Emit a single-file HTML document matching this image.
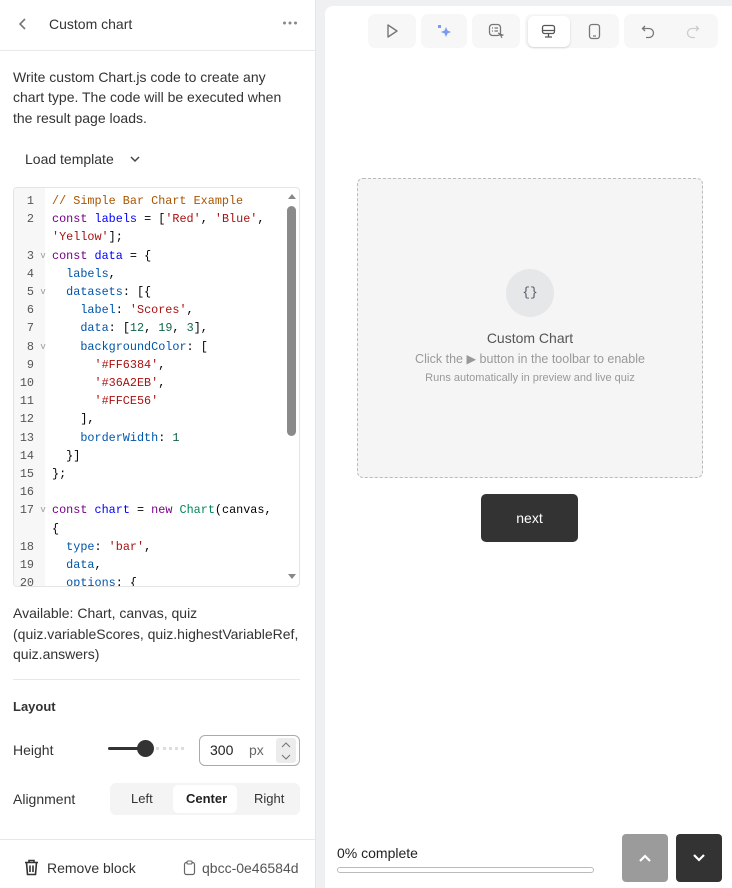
<!DOCTYPE html>
<html><head><meta charset="utf-8"><style>
*{box-sizing:border-box;margin:0;padding:0}
body{width:732px;height:888px;position:relative;background:#eff0f2;font-family:"Liberation Sans",sans-serif;color:#222;overflow:hidden}
.a{position:absolute}
#left{left:0;top:0;width:316px;height:888px;background:#fff;border-right:1px solid #e5e5e5}
#card{left:325px;top:6px;width:407px;height:882px;background:#fff;border-radius:8px 0 0 0}
.code{font-family:"Liberation Mono",monospace;font-size:11.8px;line-height:18.2px;white-space:pre}
.ln{color:#555;text-align:right;width:20px}
.k{color:#708}.d{color:#00f}.v{color:#05a}.s{color:#a11}.n{color:#164}.c{color:#a50}.t{color:#085}
.tb{background:#f7f7f8;border-radius:7px;height:34px;top:14px}
.tb svg{position:absolute}
</style></head><body>
<div id="left" class="a">
  <svg class="a" style="left:17px;top:17px" width="12" height="14" viewBox="0 0 12 14"><path d="M8 2 L3 7 L8 12" fill="none" stroke="#777" stroke-width="1.6"/></svg>
  <div class="a" style="left:49px;top:16px;font-size:14px;color:#333">Custom chart</div>
  <svg class="a" style="left:282px;top:20px" width="16" height="6"><circle cx="2.5" cy="3" r="1.5" fill="#888"/><circle cx="8" cy="3" r="1.5" fill="#888"/><circle cx="13.5" cy="3" r="1.5" fill="#888"/></svg>
  <div class="a" style="left:0;top:50px;width:316px;height:1px;background:#e8e8e8"></div>
  <div class="a" style="left:13px;top:67px;width:282px;font-size:14px;line-height:20.3px;color:#333">Write custom Chart.js code to create any chart type. The code will be executed when the result page loads.</div>
  <div class="a" style="left:25px;top:151px;font-size:14px;color:#333">Load template</div>
  <svg class="a" style="left:129px;top:154px" width="12" height="10"><path d="M2 3 L6 7 L10 3" fill="none" stroke="#444" stroke-width="1.5"/></svg>
  <div class="a" style="left:13px;top:187px;width:287px;height:400px;border:1px solid #e4e4e4;border-radius:4px;overflow:hidden;background:#fff">
    <div class="a" style="left:0;top:0;width:31px;height:400px;background:#f7f7f7"></div>
    <div class="a code ln" style="left:0;top:4px;width:20px">1
2

3
4
5
6
7
8
9
10
11
12
13
14
15
16
17

18
19
20</div>
    <div class="a code" style="left:21px;top:4px;color:#999;font-size:9px;line-height:18.2px">


 v

 v


 v








 v</div>
    <div class="a code" style="left:38px;top:4px;color:#000"><span class="c">// Simple Bar Chart Example</span>
<span class="k">const</span> <span class="d">labels</span> = [<span class="s">'Red'</span>, <span class="s">'Blue'</span>,
<span class="s">'Yellow'</span>];
<span class="k">const</span> <span class="d">data</span> = {
  <span class="v">labels</span>,
  <span class="v">datasets</span>: [{
    <span class="v">label</span>: <span class="s">'Scores'</span>,
    <span class="v">data</span>: [<span class="n">12</span>, <span class="n">19</span>, <span class="n">3</span>],
    <span class="v">backgroundColor</span>: [
      <span class="s">'#FF6384'</span>,
      <span class="s">'#36A2EB'</span>,
      <span class="s">'#FFCE56'</span>
    ],
    <span class="v">borderWidth</span>: <span class="n">1</span>
  }]
};

<span class="k">const</span> <span class="d">chart</span> = <span class="k">new</span> <span class="t">Chart</span>(canvas,
{
  <span class="v">type</span>: <span class="s">'bar'</span>,
  <span class="v">data</span>,
  <span class="v">options</span>: {</div>
    <div class="a" style="left:273px;top:18px;width:9px;height:230px;background:#8a8a8a;border-radius:5px"></div>
    <svg class="a" style="left:273px;top:4px" width="10" height="8"><path d="M1 7 L5 2 L9 7Z" fill="#888"/></svg>
    <svg class="a" style="left:273px;top:385px" width="10" height="8"><path d="M1 1 L5 6 L9 1Z" fill="#888"/></svg>
  </div>
  <div class="a" style="left:13px;top:603px;width:300px;font-size:14px;line-height:20.5px;color:#333">Available: Chart, canvas, quiz (quiz.variableScores, quiz.highestVariableRef, quiz.answers)</div>
  <div class="a" style="left:13px;top:679px;width:287px;height:1px;background:#e8e8e8"></div>
  <div class="a" style="left:13px;top:699px;font-size:13px;font-weight:bold;color:#333">Layout</div>
  <div class="a" style="left:13px;top:742px;font-size:14px;color:#333">Height</div>
  <div class="a" style="left:108px;top:747px;width:38px;height:3px;background:#333;border-radius:2px"></div>
  <div class="a" style="left:137px;top:740px;width:17px;height:17px;background:#333;border-radius:50%"></div>
  <div class="a" style="left:156px;top:747px;width:28px;height:3px;border-top:3px dotted #ddd"></div>
  <div class="a" style="left:199px;top:735px;width:101px;height:31px;border:1px solid #aaa;border-radius:6px"></div>
  <div class="a" style="left:210px;top:742px;font-size:14px;color:#222">300</div>
  <div class="a" style="left:249px;top:742px;font-size:14px;color:#666">px</div>
  <div class="a" style="left:276px;top:738px;width:20px;height:25px;background:#ececec;border-radius:3px"></div>
  <svg class="a" style="left:279px;top:739px" width="14" height="24"><path d="M3 8 L7 4 L11 8 M3 16 L7 20 L11 16" fill="none" stroke="#777" stroke-width="1.1"/></svg>
  <div class="a" style="left:13px;top:791px;font-size:14px;color:#333">Alignment</div>
  <div class="a" style="left:110px;top:783px;width:190px;height:32px;background:#f4f4f5;border-radius:6px"></div>
  <div class="a" style="left:173px;top:785px;width:64px;height:28px;background:#fff;border-radius:5px"></div>
  <div class="a" style="left:131px;top:791px;font-size:13px;color:#333">Left</div>
  <div class="a" style="left:186px;top:791px;font-size:13px;font-weight:bold;color:#222">Center</div>
  <div class="a" style="left:254px;top:791px;font-size:13px;color:#333">Right</div>
  <div class="a" style="left:0;top:839px;width:316px;height:1px;background:#e8e8e8"></div>
  <svg class="a" style="left:24px;top:859px" width="15" height="17" viewBox="0 0 15 17"><path d="M1 3.5H14M5 3.5V1.5H10V3.5M2.5 3.5L3.5 15.5H11.5L12.5 3.5M6 6.5V13M9 6.5V13" fill="none" stroke="#333" stroke-width="1.6"/></svg>
  <div class="a" style="left:47px;top:860px;font-size:14px;color:#333">Remove block</div>
  <svg class="a" style="left:183px;top:860px" width="13" height="16"><rect x="1.5" y="2.5" width="10" height="12" rx="2" fill="none" stroke="#666" stroke-width="1.2"/><rect x="4" y="1" width="5" height="3" rx="1" fill="#fff" stroke="#666" stroke-width="1.1"/></svg>
  <div class="a" style="left:202px;top:860px;font-size:14px;color:#555">qbcc-0e46584d</div>
</div>
<div id="card" class="a"></div>
<div class="a tb" style="left:368px;width:48px"><svg style="left:17px;top:9px" width="14" height="16"><path d="M3 2 L12 8 L3 14Z" fill="none" stroke="#777" stroke-width="1.4" stroke-linejoin="round"/></svg></div>
<div class="a tb" style="left:421px;width:46px"><svg style="left:15px;top:9px" width="16" height="16"><path d="M10 4 L11.5 7.5 L15 9 L11.5 10.5 L10 14 L8.5 10.5 L5 9 L8.5 7.5Z" fill="#7b9bf0"/><rect x="2" y="2" width="3" height="3" fill="#7b9bf0"/></svg></div>
<div class="a tb" style="left:472px;width:48px"><svg style="left:16px;top:9px" width="16" height="16"><rect x="1.5" y="1.5" width="11" height="11" rx="3" fill="none" stroke="#777" stroke-width="1.3"/><path d="M4 5H5M6.5 5H10M4 8H5M6.5 8H10" stroke="#777" stroke-width="1.2"/><path d="M10 10L15 12L13 13L14 15" fill="#777" stroke="#777"/></svg></div>
<div class="a tb" style="left:525px;width:94px"></div>
<div class="a" style="left:528px;top:16px;width:42px;height:31px;background:#fff;border-radius:6px;box-shadow:0 1px 2px rgba(0,0,0,.15)"></div>
<svg class="a" style="left:541px;top:24px" width="15" height="15"><rect x="1.5" y="1.5" width="12" height="8" rx="2" fill="none" stroke="#555" stroke-width="1.3"/><path d="M1.5 6.5H13.5M7.5 9.5V12.5M4 13H11" stroke="#555" stroke-width="1.3"/></svg>
<svg class="a" style="left:588px;top:23px" width="13" height="17"><rect x="1.5" y="1.5" width="10" height="14" rx="2.5" fill="none" stroke="#777" stroke-width="1.3"/><path d="M5 13H8" stroke="#777" stroke-width="1.2"/></svg>
<div class="a tb" style="left:624px;width:94px"></div>
<svg class="a" style="left:641px;top:24px" width="14" height="15"><path d="M4 2 L1.5 4.5 L4 7 M1.5 4.5 H8 A4.5 4.5 0 0 1 8 13.5 H5" fill="none" stroke="#777" stroke-width="1.3"/></svg>
<svg class="a" style="left:686px;top:24px" width="14" height="15"><path d="M10 2 L12.5 4.5 L10 7 M12.5 4.5 H6 A4.5 4.5 0 0 0 6 13.5 H9" fill="none" stroke="#ccc" stroke-width="1.3"/></svg>
<div class="a" style="left:357px;top:178px;width:346px;height:300px;background:#f5f5f5;border:1px dashed #bbb;border-radius:6px"></div>
<div class="a" style="left:506px;top:269px;width:48px;height:48px;border-radius:50%;background:#e6e7e9;text-align:center;line-height:48px;font-size:13px;color:#556;font-family:'Liberation Mono',monospace">{}</div>
<div class="a" style="left:357px;top:330px;width:346px;text-align:center;font-size:14px;color:#555">Custom Chart</div>
<div class="a" style="left:357px;top:351px;width:346px;text-align:center;font-size:12.5px;color:#999">Click the ▶ button in the toolbar to enable</div>
<div class="a" style="left:357px;top:372px;width:346px;text-align:center;font-size:11px;color:#999">Runs automatically in preview and live quiz</div>
<div class="a" style="left:481px;top:494px;width:97px;height:48px;background:#333;border-radius:5px;color:#fff;font-size:14px;text-align:center;line-height:48px">next</div>
<div class="a" style="left:337px;top:845px;font-size:14px;color:#222">0% complete</div>
<div class="a" style="left:337px;top:867px;width:257px;height:6px;border:1px solid #bbb;border-radius:4px"></div>
<div class="a" style="left:622px;top:834px;width:46px;height:48px;background:#9b9b9b;border-radius:4px"></div>
<svg class="a" style="left:637px;top:852px" width="16" height="12"><path d="M3 9 L8 4 L13 9" fill="none" stroke="#fff" stroke-width="2.2"/></svg>
<div class="a" style="left:676px;top:834px;width:46px;height:48px;background:#333;border-radius:4px"></div>
<svg class="a" style="left:691px;top:852px" width="16" height="12"><path d="M3 3 L8 8 L13 3" fill="none" stroke="#fff" stroke-width="2.2"/></svg>
</body></html>
